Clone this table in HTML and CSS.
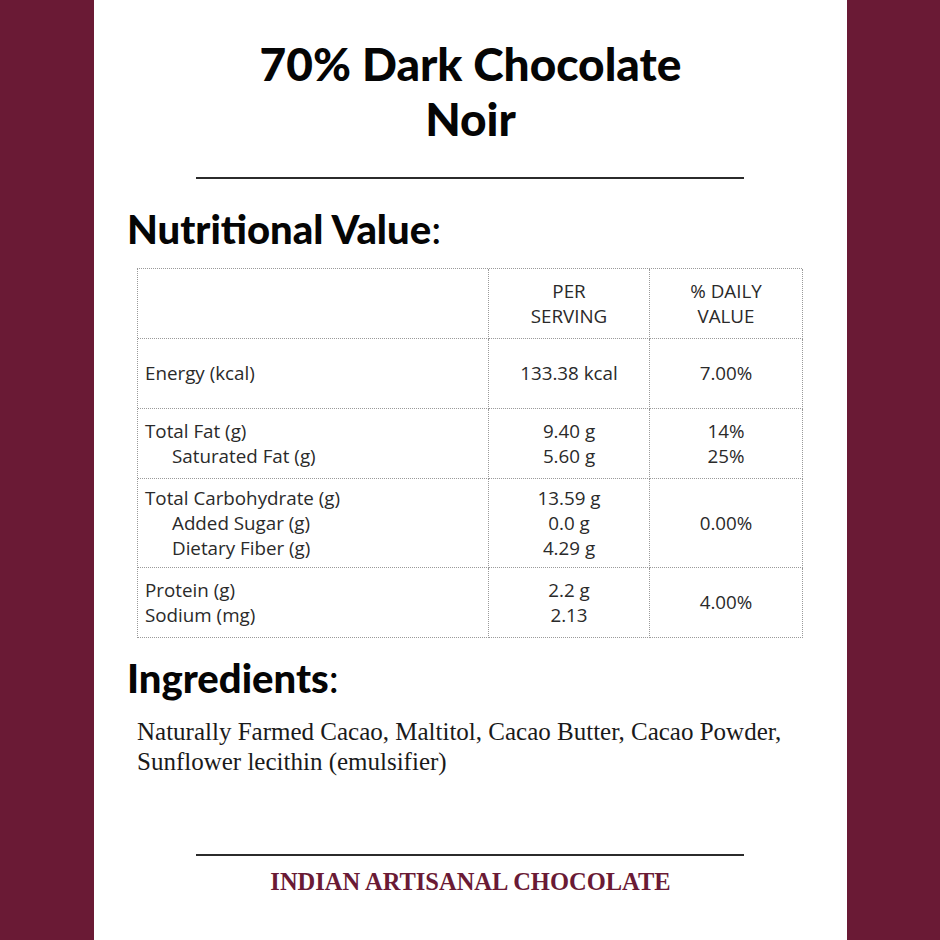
FILE: index.html
```html
<!DOCTYPE html>
<html>
<head>
<meta charset="utf-8">
<link rel="stylesheet" href="styles.css">
</head>
<body>
<div class="page">
  <div class="side"></div>
  <main class="sheet">
    <h1 class="title">70% Dark Chocolate<br>Noir</h1>
    <hr class="rule">
    <h2 class="heading">Nutritional Value<span class="colon">:</span></h2>
    <div class="table">
      <div class="cell"></div>
      <div class="cell center">PER<br>SERVING</div>
      <div class="cell center">% DAILY<br>VALUE</div>

      <div class="cell">Energy (kcal)</div>
      <div class="cell center">133.38 kcal</div>
      <div class="cell center">7.00%</div>

      <div class="cell"><div>Total Fat (g)</div><div class="sub">Saturated Fat (g)</div></div>
      <div class="cell center">9.40 g<br>5.60 g</div>
      <div class="cell center">14%<br>25%</div>

      <div class="cell"><div>Total Carbohydrate (g)</div><div class="sub">Added Sugar (g)</div><div class="sub">Dietary Fiber (g)</div></div>
      <div class="cell center">13.59 g<br>0.0 g<br>4.29 g</div>
      <div class="cell center">0.00%</div>

      <div class="cell"><div>Protein (g)</div><div>Sodium (mg)</div></div>
      <div class="cell center">2.2 g<br>2.13</div>
      <div class="cell center">4.00%</div>
    </div>
    <h2 class="heading ing">Ingredients<span class="colon">:</span></h2>
    <p class="ingredients">Naturally Farmed Cacao, Maltitol, Cacao Butter, Cacao Powder,<br>Sunflower lecithin (emulsifier)</p>
    <hr class="rule bottom">
    <div class="brand">INDIAN ARTISANAL CHOCOLATE</div>
  </main>
  <div class="side"></div>
</div>
</body>
</html>
```

FILE: styles.css
```css
html, body {
  margin: 0;
  padding: 0;
}
.page {
  display: grid;
  grid-template-columns: 94px 753px 93px;
  width: 940px;
  height: 940px;
}
.side {
  background: #6a1a35;
}
.sheet {
  background: #ffffff;
  display: flex;
  flex-direction: column;
  padding-top: 36px;
}
.title {
  margin: 0;
  text-align: center;
  font-family: "Lato", sans-serif;
  font-weight: 900;
  font-size: 46px;
  line-height: 55px;
  color: #050505;
}
.rule {
  margin: 31px 0 0 102px;
  width: 548px;
  height: 2px;
  border: 0;
  background: #2b2b2b;
}
.heading {
  margin: 28px 0 0 33px;
  font-family: "Lato", sans-serif;
  font-weight: 900;
  font-size: 40px;
  line-height: 44px;
  color: #050505;
}
.colon {
  font-weight: 400;
}
.table {
  margin: 17px 0 0 43px;
  width: 665px;
  display: grid;
  grid-template-columns: 351px 161px 153px;
  grid-template-rows: 70px 70px 70px 89px 70px;
  border-top: 1px dotted #9a9a9a;
  border-left: 1px dotted #9a9a9a;
  box-sizing: border-box;
}
.cell {
  border-right: 1px dotted #9a9a9a;
  border-bottom: 1px dotted #9a9a9a;
  display: flex;
  flex-direction: column;
  justify-content: center;
  padding-left: 7px;
  font-family: "Open Sans", sans-serif;
  font-size: 18.8px;
  line-height: 25px;
  color: #2a2a2a;
}
.cell.center {
  align-items: center;
  text-align: center;
  padding-left: 0;
}
.sub {
  padding-left: 27px;
}
.heading.ing {
  margin-top: 18px;
}
.ingredients {
  margin: 17px 0 0 43px;
  font-family: "Liberation Serif", serif;
  font-size: 25px;
  line-height: 30px;
  color: #1a1a1a;
}
.rule.bottom {
  margin-top: 77px;
}
.brand {
  margin-top: 12px;
  text-align: center;
  font-family: "Liberation Serif", serif;
  font-weight: 700;
  font-size: 24.5px;
  color: #6a1a35;
}
```
